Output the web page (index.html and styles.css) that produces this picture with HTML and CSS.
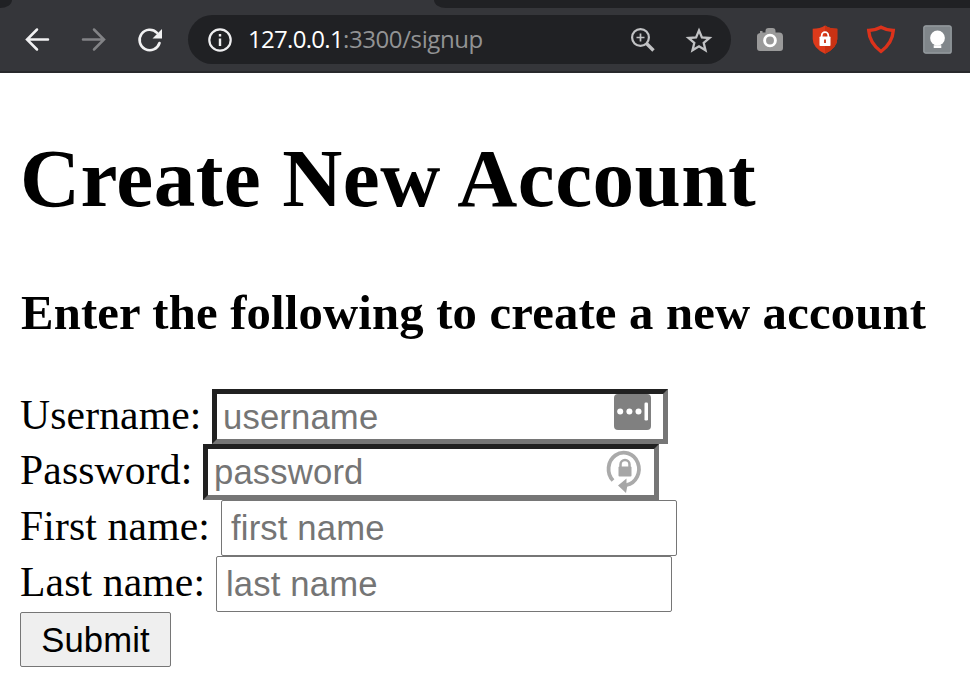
FILE: index.html
```
<!DOCTYPE html>
<html lang="en">
<head>
<meta charset="utf-8">
<title>Create New Account</title>
<link rel="stylesheet" href="styles.css">
</head>
<body>
<header class="browser">
  <div class="tabs"><div class="tab-before"></div><div class="tab-active"></div><div class="tab-after"></div></div>
  <nav class="toolbar">
    <svg class="nav-icon" width="24" height="24" viewBox="0 0 24 24" fill="none" stroke="#f1f1f2" stroke-width="2.5" stroke-linecap="round"><path d="M23 11.500H2.500M12 1.500L2 11.500l10 10"/></svg>
    <svg class="nav-icon forward" width="24" height="24" viewBox="0 0 24 24" fill="none" stroke="#828386" stroke-width="2.5" stroke-linecap="round"><path d="M1 11.500h20.500M12 1.500l10 10-10 10"/></svg>
    <svg class="nav-icon reload" width="24" height="24" viewBox="0 0 24 24"><path d="M21.500 15A10.200 10.200 0 1 1 19 4.800" fill="none" stroke="#f1f1f2" stroke-width="2.600" stroke-linecap="round"/><path d="M24 1v9.500h-9.500z" fill="#f1f1f2"/></svg>
    <div class="address">
      <svg width="24" height="24" viewBox="0 0 24 24"><circle cx="12" cy="12" r="10.700" fill="none" stroke="#eeeef0" stroke-width="2.200"/><path d="M12 6v2.500M12 10.500V18" stroke="#eeeef0" stroke-width="2.400"/></svg>
      <div class="url"><span class="host">127.0.0.1</span><span class="path">:3300/signup</span></div>
      <svg class="zoom" width="24" height="24" viewBox="0 0 24 24" fill="none" stroke="#c1c2c4"><circle cx="9.500" cy="9.500" r="8.400" stroke-width="2.200"/><path d="M9.500 5.500v8M5.500 9.500h8" stroke-width="1.700"/><path d="M15.500 15.500l7 7" stroke-width="3.300"/></svg>
      <svg class="star" width="26" height="26" viewBox="0 0 26 26"><path d="M13 3.400l2.900 7 7.600.6-5.800 4.900 1.800 7.400-6.500-4-6.500 4 1.800-7.400L2.500 11l7.600-.6z" fill="none" stroke="#c1c2c4" stroke-width="2.300"/></svg>
    </div>
    <svg class="camera" width="28" height="26" viewBox="0 0 28 26"><path d="M4 6V4h2.500v1.500H9.500V4q0-3 3-3h4q3 0 3 3v1.500H23q4 0 4 4V21q0 3-3 3H4q-3 0-3-3V9q0-2.500 3-3z" fill="#9a9a9a"/><circle cx="14" cy="13.500" r="5.400" fill="#999" stroke="#fff" stroke-width="2.900"/></svg>
    <svg class="shield" width="26" height="29" viewBox="0 0 26 29"><path d="M13 .5q5 3.200 12.300 3.200V14q0 9-12.300 14.700Q.7 23 .7 14V3.700Q8 3.700 13 .5z" fill="#dd3a1b"/><path d="M13 .5q5 3.200 12.300 3.200V14q0 9-12.300 14.700z" fill="#c93213"/><path d="M9.700 12v-1.500a3.300 3.300 0 0 1 6.600 0V12" fill="none" stroke="#fff" stroke-width="1.700"/><rect x="7.500" y="11.500" width="11" height="9.500" rx=".8" fill="#fff"/><path d="M13 14.500v3.500" stroke="#c93213" stroke-width="1.800"/></svg>
    <svg class="outline" width="30" height="29" viewBox="0 0 30 29"><path d="M15 2.300q5.500 3 12.300 3.200-.8 12.500-12.300 21Q3.500 18 2.700 5.500 9.500 5.300 15 2.300z" fill="none" stroke="#dc321b" stroke-width="3.400"/></svg>
    <svg class="bulb" width="29" height="29" viewBox="0 0 29 29"><rect x=".8" y=".8" width="27.400" height="27.400" rx="2" fill="#80868a" stroke="#9aa0a4" stroke-width="1.200"/><circle cx="14.500" cy="13" r="7.400" fill="#fff"/><path d="M11 16h7v3h-7z M10.700 20.200h7.600V23h-7.600z" fill="#fff"/></svg>
  </nav>
</header>
<main>
  <h1>Create New Account</h1>
  <h3>Enter the following to create a new account</h3>
  <form>
    <div class="row"><label class="l-user" for="username">Username:</label><div class="field"><input class="inset" id="username" type="text" placeholder="username">
      <svg class="badge key" width="37" height="36" viewBox="0 0 37 36"><rect width="37" height="36" rx="4" fill="#808080"/><g fill="#fff"><circle cx="6.200" cy="17.500" r="3"/><circle cx="15.400" cy="17.500" r="3"/><circle cx="24.500" cy="17.500" r="3"/><rect x="30.500" y="8.500" width="3.500" height="18" rx="1.200"/></g></svg></div></div>
    <div class="row"><label class="l-pass" for="password">Password:</label><div class="field"><input class="inset raised" id="password" type="password" placeholder="password">
      <svg class="badge cycle" width="35" height="44" viewBox="0 0 35 44"><path d="M5 30.500A15.200 16.300 0 1 1 18.500 35" fill="none" stroke="#aaa" stroke-width="3.800"/><path d="M18.500 28.500v4.500l1 2-1.500 8L10 35.500z" fill="#a6a6a6"/><path d="M12.500 18v-3.500a4.500 4.500 0 0 1 9 0V18" fill="none" stroke="#a6a6a6" stroke-width="2.500"/><rect x="10.500" y="16.500" width="13" height="10" rx="1" fill="#a6a6a6"/></svg></div></div>
    <div class="row"><label class="l-first" for="first">First name:</label><div class="field"><input id="first" type="text" placeholder="first name"></div></div>
    <div class="row"><label class="l-last" for="last">Last name:</label><div class="field"><input id="last" type="text" placeholder="last name"></div></div>
    <button type="button">Submit</button>
  </form>
</main>
</body>
</html>
```

FILE: styles.css
```
* { box-sizing: border-box; }
body { margin: 0; background: #fff; color: #000; font-family: "Liberation Serif", serif; overflow: hidden; }
svg { display: block; flex: none; overflow: visible; }
.browser { height: 73px; background: #35363a; border-bottom: 2px solid #28292c; }
.tabs { display: flex; height: 8px; }
.tab-before { width: 12px; background: #202124; border-bottom-right-radius: 12px 8px; }
.tab-active { width: 422px; }
.tab-after { flex: 1; background: #202124; border-bottom-left-radius: 12px 8px; }
.toolbar { display: flex; align-items: center; height: 63px; padding-left: 25px; }
.forward { margin-left: 33px; }
.reload { margin-left: 32px; }
.address { display: flex; align-items: center; width: 543px; height: 49px; margin-left: 26px; padding-left: 20px; border-radius: 25px; background: #202124; }
.url { width: 399px; height: 48px; padding-left: 16px; font: 24px/46px "Open Sans", sans-serif; white-space: nowrap; }
.host { display: inline-block; width: 95px; color: #fff; letter-spacing: -.7px; }
.path { color: #929394; letter-spacing: -.4px; }
.star { margin-left: 31px; }
.camera { margin-left: 25px; }
.shield { margin-left: 28px; }
.outline { margin-left: 28px; }
.bulb { margin-left: 27px; }
main { padding: 0 20px; }
h1, h3 { margin: 0; font-weight: bold; white-space: nowrap; }
h1 { padding-top: 57px; font-size: 83.200px; line-height: 96px; letter-spacing: .42px; }
h3 { padding: 59px 0 0 1px; font-size: 48.700px; line-height: 56px; letter-spacing: .18px; }
form { margin-top: 48px; font-size: 41.600px; }
.row { display: flex; height: 56px; }
.row:first-child { height: 55px; }
label { line-height: 53px; white-space: nowrap; letter-spacing: .15px; }
.l-user { width: 192px; }
.l-pass { width: 183px; }
.l-first { width: 201px; }
.l-last { width: 196px; }
.field { position: relative; width: 456px; height: 100%; }
input { display: block; width: 100%; height: 100%; margin: 0; padding: 1px 9px 0; border: 1px solid #767676; border-radius: 2px; background: #fff; font: 34.670px "Liberation Sans", sans-serif; letter-spacing: .15px; }
input::placeholder { color: #757575; opacity: 1; }
.inset { padding: 2px 6px 0; border: 5px solid; border-color: #212121 #767676 #767676 #212121; border-radius: 0; }
.raised { padding-top: 0; }
.badge { position: absolute; }
.key { left: 402px; top: 5px; }
.cycle { left: 405px; top: 6px; }
button { display: block; width: 151px; height: 55px; padding: 1px 0 0; border: 1px solid #767676; border-radius: 2px; background: #efefef; color: #000; font: 34.670px "Liberation Sans", sans-serif; letter-spacing: .1px; }
```
